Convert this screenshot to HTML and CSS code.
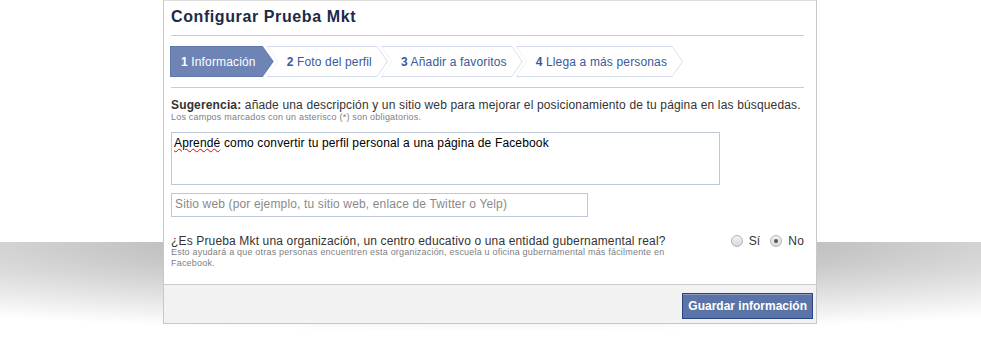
FILE: index.html
```html
<!DOCTYPE html>
<html lang="es">
<head>
  <meta charset="UTF-8">
  <title>Configurar Prueba Mkt</title>
  <link rel="stylesheet" href="styles.css">
</head>
<body>
  <div class="dialog">
    <div class="dialog-body">
      <h2 class="title">Configurar Prueba Mkt</h2>
      <div class="steps-bar">
        <ol class="steps">
          <li class="step active"><span><b>1</b> Información</span></li>
          <li class="step"><span><b>2</b> Foto del perfil</span></li>
          <li class="step"><span><b>3</b> Añadir a favoritos</span></li>
          <li class="step"><span><b>4</b> Llega a más personas</span></li>
        </ol>
      </div>
      <p class="hint"><b>Sugerencia:</b> añade una descripción y un sitio web para mejorar el posicionamiento de tu página en las búsquedas.</p>
      <p class="note">Los campos marcados con un asterisco (*) son obligatorios.</p>
      <div class="textarea"><span class="misspelled">Aprendé</span> como convertir tu perfil personal a una página de Facebook</div>
      <div class="input placeholder">Sitio web (por ejemplo, tu sitio web, enlace de Twitter o Yelp)</div>
      <div class="question">
        <div class="q-text">
          <p class="q">¿Es Prueba Mkt una organización, un centro educativo o una entidad gubernamental real?</p>
          <p class="note">Esto ayudará a que otras personas encuentren esta organización, escuela u oficina gubernamental más fácilmente en Facebook.</p>
        </div>
        <div class="radios">
          <label class="radio"><span class="dot"></span>Sí</label>
          <label class="radio"><span class="dot checked"></span>No</label>
        </div>
      </div>
    </div>
    <div class="dialog-footer">
      <button type="button">Guardar información</button>
    </div>
  </div>
</body>
</html>
```

FILE: styles.css
```css
html {
  background: #fff;
}
body {
  margin: 0;
  min-height: 341px;
  font-family: "Liberation Sans", Arial, sans-serif;
  font-size: 12px;
  letter-spacing: 0.15px;
  color: #333;
  background: radial-gradient(ellipse 900px 90px at 50% 0, #ababab 0%, #b0b0b0 18%, #fff 100%) 0 242px / 100% 99px no-repeat, #fff;
}
.dialog {
  width: 652px;
  margin-left: 163px;
  background-color: #fff;
  border: 1px solid #c8c8c8;
  border-top-color: #ddd;
}
.dialog-body {
  padding: 6px 12px 15px 7px;
}
.title {
  margin: 0;
  padding-bottom: 9px;
  border-bottom: 1px solid #ccc;
  font-size: 16px;
  line-height: 19px;
  letter-spacing: 0.6px;
  font-weight: bold;
  color: #1c2a47;
}
.steps-bar {
  padding: 10px 0 10px 0;
  border-bottom: 1px solid #ccc;
}
.steps {
  display: flex;
  margin: 0 0 0 -1px;
  padding: 0;
  list-style: none;
}
.step {
  position: relative;
  height: 31px;
  line-height: 32px;
  padding: 0 16px 0 20px;
  margin-left: -7px;
  color: #3b5998;
  background-color: #d4dbeb;
  clip-path: polygon(0 0, calc(100% - 11px) 0, 100% 50%, calc(100% - 11px) 100%, 0 100%, 11px 50%);
}
.step::before {
  content: "";
  position: absolute;
  inset: 1px 1px 1px 1px;
  background-color: #fff;
  clip-path: polygon(0 0, calc(100% - 10px) 0, 100% 50%, calc(100% - 10px) 100%, 0 100%, 10px 50%);
}
.step span {
  position: relative;
}
.step.active {
  margin-left: 0;
  padding-left: 11px;
  padding-right: 18px;
  color: #fff;
  background-color: #5f77aa;
  clip-path: polygon(0 0, calc(100% - 11px) 0, 100% 50%, calc(100% - 11px) 100%, 0 100%);
}
.step.active::before {
  background-color: #6d84b4;
  clip-path: polygon(0 0, calc(100% - 10px) 0, 100% 50%, calc(100% - 10px) 100%, 0 100%);
}
.hint {
  margin: 10px 0 0;
  line-height: 14px;
}
.note {
  margin: 0;
  font-size: 9px;
  line-height: 11px;
  letter-spacing: 0.2px;
  color: #808080;
}
.textarea {
  box-sizing: border-box;
  width: 549px;
  height: 53px;
  margin-top: 9px;
  padding: 3px 2px;
  border: 1px solid #bdc7d8;
  line-height: 15px;
  color: #000;
}
.misspelled {
  text-decoration: underline wavy #e00;
  text-decoration-thickness: 1px;
}
.input {
  box-sizing: border-box;
  width: 417px;
  height: 24px;
  margin-top: 8px;
  padding: 0 3px;
  border: 1px solid #bdc7d8;
  line-height: 20px;
}
.placeholder {
  color: #8a8a8a;
}
.question {
  display: flex;
  justify-content: space-between;
  align-items: flex-start;
  margin-top: 18px;
}
.q-text {
  width: 500px;
}
.q {
  margin: 0;
  line-height: 12px;
  color: #333;
}
.radios {
  display: flex;
  gap: 10px;
  margin-top: -1px;
  line-height: 14px;
}
.radio {
  display: flex;
  align-items: center;
  gap: 6px;
}
.dot {
  box-sizing: border-box;
  width: 12px;
  height: 12px;
  border: 1px solid #b4b4b4;
  border-radius: 50%;
  background: linear-gradient(#f4f4f4, #d8d8d8);
  display: flex;
  align-items: center;
  justify-content: center;
}
.dot.checked::after {
  content: "";
  width: 4px;
  height: 4px;
  border-radius: 50%;
  background-color: #555;
}
.dialog-footer {
  display: flex;
  justify-content: flex-end;
  padding: 8px 3px 4px;
  background-color: #f2f2f2;
  border-top: 1px solid #ccc;
}
button {
  height: 26px;
  padding: 0 5px;
  font-family: inherit;
  font-size: 12px;
  font-weight: bold;
  letter-spacing: 0;
  line-height: 24px;
  color: #fff;
  background-color: #5b74a8;
  border: 1px solid #29447e;
  box-shadow: inset 0 1px 0 #8a9cc2;
  cursor: pointer;
}
```
